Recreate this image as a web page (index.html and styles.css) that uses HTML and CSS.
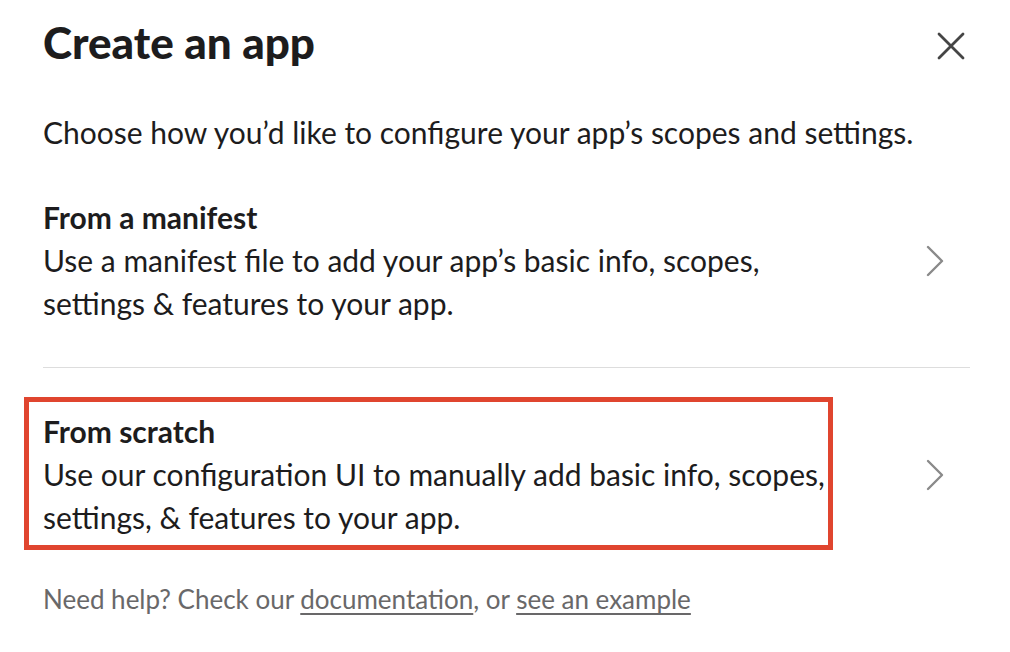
FILE: index.html
```html
<!DOCTYPE html>
<html>
	<head>
		<meta charset="UTF-8">
		<title>Create an app</title>
		<link rel="stylesheet" href="styles.css">
	</head>
	<body>
		<div id="modal">
			<div class="header">
				<h1>Create an app</h1>
				<div class="close">
					<svg width="28" height="28" viewBox="0 0 28 28">
						<path d="M2 2 L26 26 M26 2 L2 26" stroke="#454545" stroke-width="2.8" stroke-linecap="round" fill="none"/>
					</svg>
				</div>
			</div>
			<p class="intro">Choose how you’d like to configure your app’s scopes and settings.</p>
			<ul id="options">
				<li class="option">
					<div class="text">
						<div class="name">From a manifest</div>
						<div class="desc">Use a manifest file to add your app’s basic info, scopes, settings &amp; features to your app.</div>
					</div>
					<div class="arrow">
						<svg width="18" height="32" viewBox="0 0 18 32">
							<path d="M2 2 L16 16 L2 30" stroke="#8a8a8a" stroke-width="2.4" stroke-linecap="round" stroke-linejoin="round" fill="none"/>
						</svg>
					</div>
				</li>
				<li class="option">
					<div class="text marked">
						<div class="name">From scratch</div>
						<div class="desc">Use our configuration UI to manually add basic info, scopes, settings, &amp; features to your app.</div>
					</div>
					<div class="arrow">
						<svg width="18" height="32" viewBox="0 0 18 32">
							<path d="M2 2 L16 16 L2 30" stroke="#8a8a8a" stroke-width="2.4" stroke-linecap="round" stroke-linejoin="round" fill="none"/>
						</svg>
					</div>
				</li>
			</ul>
			<p class="help">Need help? Check our <a href="#">documentation</a>, or <a href="#">see an example</a></p>
		</div>
	</body>
</html>
```

FILE: styles.css
```css
body, ul, p, h1 {
	padding: 0;
	margin: 0;
}
li {
	list-style: none;
}

body {
	background: #fff;
	font-family: Lato, "Noto Sans", sans-serif;
	color: #1d1c1d;
}

#modal {
	padding: 0 40px 0 43px;
}

.header {
	display: flex;
	justify-content: space-between;
	align-items: flex-start;
	padding-top: 14px;
}

.header h1 {
	font-size: 44px;
	line-height: 56px;
	font-weight: 900;
}

.close {
	margin: 18px 5px 0 0;
	height: 28px;
}

.intro {
	margin-top: 41px;
	font-size: 30px;
	line-height: 43px;
}

.option {
	display: flex;
	align-items: center;
	padding: 42px 0;
}

.option + .option {
	border-top: 1px solid #dddddd;
}

.option .text {
	width: 790px;
	font-size: 30px;
	line-height: 43px;
}

.option .name {
	font-weight: 700;
}

.option .text.marked {
	position: relative;
}

.option .text.marked::after {
	content: "";
	position: absolute;
	left: -19px;
	right: 0;
	top: -13px;
	bottom: -11px;
	border: 5px solid #e0452f;
}

.arrow {
	margin-left: auto;
	margin-right: 26px;
	height: 32px;
}

.help {
	font-size: 26px;
	line-height: 36px;
	color: #696869;
}

.help a {
	color: #696869;
	text-decoration: underline;
	text-underline-offset: 4px;
}
```
